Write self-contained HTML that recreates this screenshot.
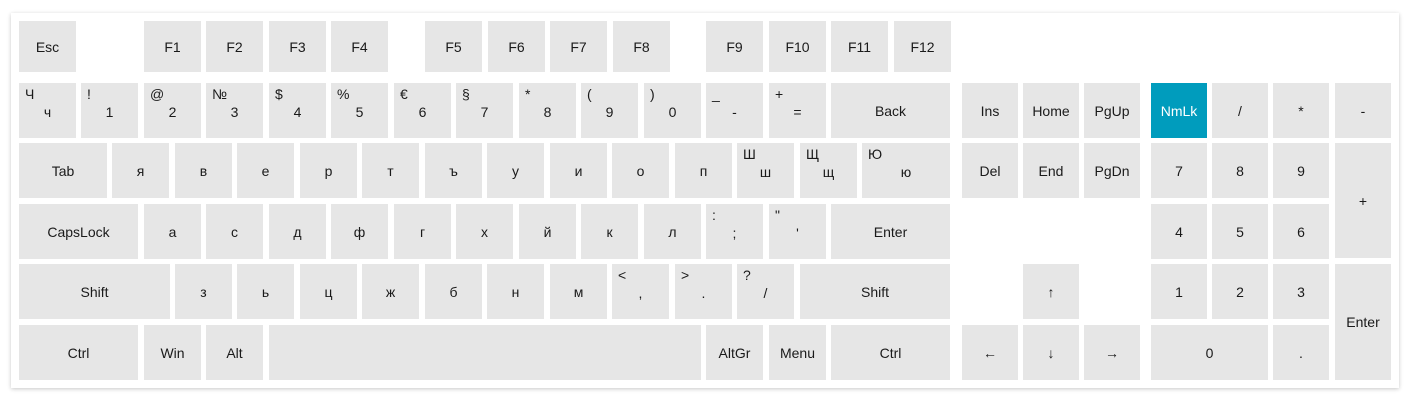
<!DOCTYPE html>
<html><head><meta charset="utf-8"><style>
html,body{margin:0;padding:0;background:#fff;width:1416px;height:404px;overflow:hidden}
.box{position:absolute;left:11px;top:13px;width:1388px;height:375px;background:#fff;box-shadow:0 1px 4px rgba(0,0,0,.22)}
.k{position:absolute;background:#e6e6e6;display:flex;align-items:center;justify-content:center;font-family:"Liberation Sans","DejaVu Sans",sans-serif;font-size:14px;color:#1a1a1a;width:57px;height:55px}
.k.f{height:51px;top:21px}
.k .s{position:absolute;left:6px;top:3px}
.k .m{position:relative;top:1px}
.k.n{width:56px}
.nl{background:#009cbd;color:#fff}
</style></head><body>
<div class="box"></div>
<!-- row 0 -->
<div class="k f" style="left:19px">Esc</div>
<div class="k f" style="left:144px">F1</div>
<div class="k f" style="left:206px">F2</div>
<div class="k f" style="left:269px">F3</div>
<div class="k f" style="left:331px">F4</div>
<div class="k f" style="left:425px">F5</div>
<div class="k f" style="left:488px">F6</div>
<div class="k f" style="left:550px">F7</div>
<div class="k f" style="left:613px">F8</div>
<div class="k f" style="left:706px">F9</div>
<div class="k f" style="left:769px">F10</div>
<div class="k f" style="left:831px">F11</div>
<div class="k f" style="left:894px">F12</div>
<!-- row 1 -->
<div class="k" style="left:19px;top:83px"><span class="s">Ч</span><span class="m">ч</span></div>
<div class="k" style="left:81px;top:83px"><span class="s">!</span><span class="m">1</span></div>
<div class="k" style="left:144px;top:83px"><span class="s">@</span><span class="m">2</span></div>
<div class="k" style="left:206px;top:83px"><span class="s">№</span><span class="m">3</span></div>
<div class="k" style="left:269px;top:83px"><span class="s">$</span><span class="m">4</span></div>
<div class="k" style="left:331px;top:83px"><span class="s">%</span><span class="m">5</span></div>
<div class="k" style="left:394px;top:83px"><span class="s">€</span><span class="m">6</span></div>
<div class="k" style="left:456px;top:83px"><span class="s">§</span><span class="m">7</span></div>
<div class="k" style="left:519px;top:83px"><span class="s">*</span><span class="m">8</span></div>
<div class="k" style="left:581px;top:83px"><span class="s">(</span><span class="m">9</span></div>
<div class="k" style="left:644px;top:83px"><span class="s">)</span><span class="m">0</span></div>
<div class="k" style="left:706px;top:83px"><span class="s">_</span><span class="m">-</span></div>
<div class="k" style="left:769px;top:83px"><span class="s">+</span><span class="m">=</span></div>
<div class="k" style="left:831px;top:83px;width:119px">Back</div>
<!-- row 2 -->
<div class="k" style="left:19px;top:143px;width:88px">Tab</div>
<div class="k" style="left:112px;top:143px">я</div>
<div class="k" style="left:175px;top:143px">в</div>
<div class="k" style="left:237px;top:143px">е</div>
<div class="k" style="left:300px;top:143px">р</div>
<div class="k" style="left:362px;top:143px">т</div>
<div class="k" style="left:425px;top:143px">ъ</div>
<div class="k" style="left:487px;top:143px">у</div>
<div class="k" style="left:550px;top:143px">и</div>
<div class="k" style="left:612px;top:143px">о</div>
<div class="k" style="left:675px;top:143px">п</div>
<div class="k" style="left:737px;top:143px"><span class="s">Ш</span><span class="m">ш</span></div>
<div class="k" style="left:800px;top:143px"><span class="s">Щ</span><span class="m">щ</span></div>
<div class="k" style="left:862px;top:143px;width:88px"><span class="s">Ю</span><span class="m">ю</span></div>
<!-- row 3 -->
<div class="k" style="left:19px;top:204px;width:119px">CapsLock</div>
<div class="k" style="left:144px;top:204px">а</div>
<div class="k" style="left:206px;top:204px">с</div>
<div class="k" style="left:269px;top:204px">д</div>
<div class="k" style="left:331px;top:204px">ф</div>
<div class="k" style="left:394px;top:204px">г</div>
<div class="k" style="left:456px;top:204px">х</div>
<div class="k" style="left:519px;top:204px">й</div>
<div class="k" style="left:581px;top:204px">к</div>
<div class="k" style="left:644px;top:204px">л</div>
<div class="k" style="left:706px;top:204px"><span class="s">:</span><span class="m">;</span></div>
<div class="k" style="left:769px;top:204px"><span class="s">"</span><span class="m">'</span></div>
<div class="k" style="left:831px;top:204px;width:119px">Enter</div>
<!-- row 4 -->
<div class="k" style="left:19px;top:264px;width:151px">Shift</div>
<div class="k" style="left:175px;top:264px">з</div>
<div class="k" style="left:237px;top:264px">ь</div>
<div class="k" style="left:300px;top:264px">ц</div>
<div class="k" style="left:362px;top:264px">ж</div>
<div class="k" style="left:425px;top:264px">б</div>
<div class="k" style="left:487px;top:264px">н</div>
<div class="k" style="left:550px;top:264px">м</div>
<div class="k" style="left:612px;top:264px"><span class="s">&lt;</span><span class="m">,</span></div>
<div class="k" style="left:675px;top:264px"><span class="s">&gt;</span><span class="m">.</span></div>
<div class="k" style="left:737px;top:264px"><span class="s">?</span><span class="m">/</span></div>
<div class="k" style="left:800px;top:264px;width:150px">Shift</div>
<!-- row 5 -->
<div class="k" style="left:19px;top:325px;width:119px">Ctrl</div>
<div class="k" style="left:144px;top:325px">Win</div>
<div class="k" style="left:206px;top:325px">Alt</div>
<div class="k" style="left:269px;top:325px;width:432px"></div>
<div class="k" style="left:706px;top:325px">AltGr</div>
<div class="k" style="left:769px;top:325px">Menu</div>
<div class="k" style="left:831px;top:325px;width:119px">Ctrl</div>
<!-- nav -->
<div class="k n" style="left:962px;top:83px">Ins</div>
<div class="k n" style="left:1023px;top:83px">Home</div>
<div class="k n" style="left:1084px;top:83px">PgUp</div>
<div class="k n" style="left:962px;top:143px">Del</div>
<div class="k n" style="left:1023px;top:143px">End</div>
<div class="k n" style="left:1084px;top:143px">PgDn</div>
<div class="k n" style="left:1023px;top:264px">↑</div>
<div class="k n" style="left:962px;top:325px">←</div>
<div class="k n" style="left:1023px;top:325px">↓</div>
<div class="k n" style="left:1084px;top:325px">→</div>
<!-- numpad -->
<div class="k n nl" style="left:1151px;top:83px">NmLk</div>
<div class="k n" style="left:1212px;top:83px">/</div>
<div class="k n" style="left:1273px;top:83px">*</div>
<div class="k n" style="left:1335px;top:83px">-</div>
<div class="k n" style="left:1151px;top:143px">7</div>
<div class="k n" style="left:1212px;top:143px">8</div>
<div class="k n" style="left:1273px;top:143px">9</div>
<div class="k n" style="left:1335px;top:143px;height:115px">+</div>
<div class="k n" style="left:1151px;top:204px">4</div>
<div class="k n" style="left:1212px;top:204px">5</div>
<div class="k n" style="left:1273px;top:204px">6</div>
<div class="k n" style="left:1151px;top:264px">1</div>
<div class="k n" style="left:1212px;top:264px">2</div>
<div class="k n" style="left:1273px;top:264px">3</div>
<div class="k n" style="left:1335px;top:264px;height:116px">Enter</div>
<div class="k n" style="left:1151px;top:325px;width:117px">0</div>
<div class="k n" style="left:1273px;top:325px">.</div>
</body></html>
